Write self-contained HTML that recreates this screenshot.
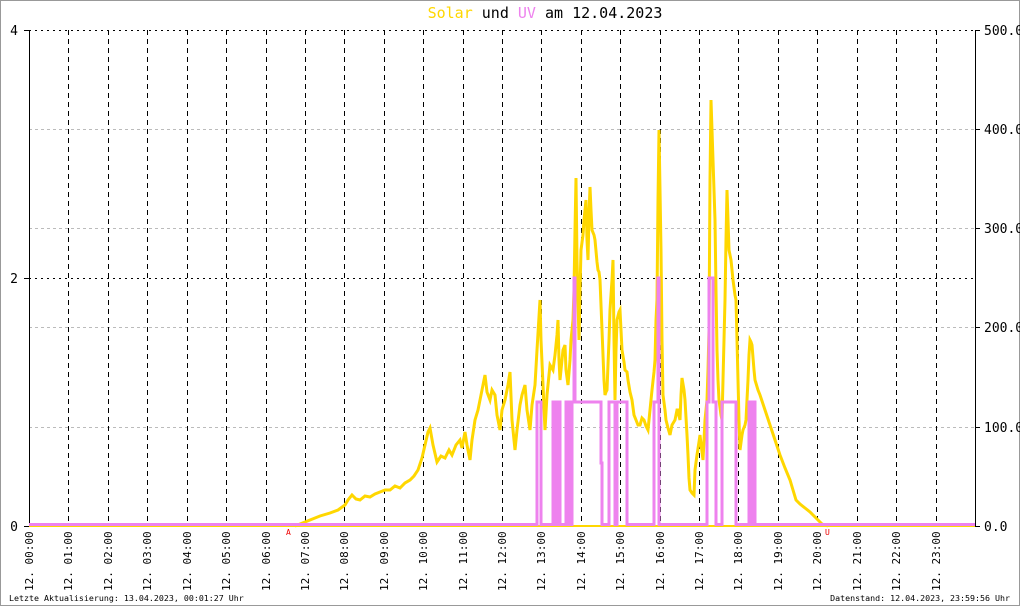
<!DOCTYPE html>
<html><head><meta charset="utf-8"><style>
html,body{margin:0;padding:0;background:#fff}
svg{display:block}
text{font-family:"DejaVu Sans Mono","Liberation Mono",monospace}
</style></head><body>
<svg width="1020" height="606" viewBox="0 0 1020 606" xmlns="http://www.w3.org/2000/svg">
<rect x="0.5" y="0.5" width="1019" height="605" fill="#fff" stroke="#999"/>
<text x="545" y="18" font-size="15" text-anchor="middle"><tspan fill="#FFD700">Solar</tspan> und <tspan fill="#EE82EE">UV</tspan> am 12.04.2023</text>
<g stroke="#bbb" stroke-dasharray="3,3" stroke-width="1">
<line x1="29" y1="129.5" x2="975" y2="129.5"/><line x1="29" y1="228.5" x2="975" y2="228.5"/>
<line x1="29" y1="327.5" x2="975" y2="327.5"/><line x1="29" y1="427.5" x2="975" y2="427.5"/>
</g>
<g stroke="#000" stroke-dasharray="2,4" stroke-width="1">
<line x1="29" y1="30.5" x2="975" y2="30.5"/><line x1="29" y1="278.5" x2="975" y2="278.5"/>
</g>
<g stroke="#000" stroke-dasharray="5,4" stroke-width="1">
<line x1="68.5" y1="30" x2="68.5" y2="526"/><line x1="108.5" y1="30" x2="108.5" y2="526"/><line x1="147.5" y1="30" x2="147.5" y2="526"/><line x1="187.5" y1="30" x2="187.5" y2="526"/><line x1="226.5" y1="30" x2="226.5" y2="526"/><line x1="266.5" y1="30" x2="266.5" y2="526"/><line x1="305.5" y1="30" x2="305.5" y2="526"/><line x1="344.5" y1="30" x2="344.5" y2="526"/><line x1="384.5" y1="30" x2="384.5" y2="526"/><line x1="423.5" y1="30" x2="423.5" y2="526"/><line x1="463.5" y1="30" x2="463.5" y2="526"/><line x1="502.5" y1="30" x2="502.5" y2="526"/><line x1="541.5" y1="30" x2="541.5" y2="526"/><line x1="581.5" y1="30" x2="581.5" y2="526"/><line x1="620.5" y1="30" x2="620.5" y2="526"/><line x1="660.5" y1="30" x2="660.5" y2="526"/><line x1="699.5" y1="30" x2="699.5" y2="526"/><line x1="738.5" y1="30" x2="738.5" y2="526"/><line x1="778.5" y1="30" x2="778.5" y2="526"/><line x1="817.5" y1="30" x2="817.5" y2="526"/><line x1="857.5" y1="30" x2="857.5" y2="526"/><line x1="896.5" y1="30" x2="896.5" y2="526"/><line x1="936.5" y1="30" x2="936.5" y2="526"/>
</g>
<line x1="29.5" y1="30" x2="29.5" y2="526" stroke="#000"/>
<line x1="975.5" y1="30" x2="975.5" y2="526" stroke="#000"/>
<line x1="29" y1="526.5" x2="975" y2="526.5" stroke="#000"/>
<g stroke="#000"><line x1="24" y1="30.5" x2="29" y2="30.5"/><line x1="24" y1="278.5" x2="29" y2="278.5"/><line x1="24" y1="526.5" x2="29" y2="526.5"/>
<line x1="975" y1="30.5" x2="980" y2="30.5"/><line x1="975" y1="129.5" x2="980" y2="129.5"/><line x1="975" y1="228.5" x2="980" y2="228.5"/><line x1="975" y1="327.5" x2="980" y2="327.5"/><line x1="975" y1="427.5" x2="980" y2="427.5"/><line x1="975" y1="526.5" x2="980" y2="526.5"/></g>
<g font-size="13" fill="#000">
<text x="18" y="35" text-anchor="end">4</text><text x="18" y="283" text-anchor="end">2</text><text x="18" y="531" text-anchor="end">0</text>
<text x="984" y="35">500.0</text><text x="984" y="134">400.0</text><text x="984" y="233">300.0</text><text x="984" y="332">200.0</text><text x="984" y="432">100.0</text><text x="984" y="531">0.0</text>
</g>
<line x1="29" y1="526" x2="975" y2="526" stroke="#FFD700" stroke-width="2"/>
<polyline fill="none" stroke="#FFD700" stroke-width="3" points="295,526 305,522 310,520 320,516 330,513 338,510 345,505 348,500 352,495 356,499 360,500 365,496 370,497 375,494 380,492 385,490 390,490 395,486 400,488 405,483 410,480 414,476 418,470 422,458 425,445 428,432 430,428 433,445 437,462 441,456 445,458 449,450 452,455 456,445 460,440 462,448 465,432 467,445 470,460 472,440 475,420 478,410 480,400 482,390 485,375 487,392 490,400 492,390 495,395 497,415 500,430 502,410 505,400 508,385 510,372 512,420 515,450 517,430 520,405 522,395 525,385 527,410 530,430 532,405 535,385 537,350 540,300 541,340 543,385 545,430 547,395 550,365 553,370 555,355 557,335 558,320 559,360 560,380 562,360 563,350 565,345 566,370 568,385 570,360 571,340 573,320 574,290 575,230 576,178 577,260 579,340 580,290 581,250 583,235 584,220 585,210 586,200 587,240 588,260 589,215 590,187 591,210 592,230 594,235 595,240 597,262 598,270 599,272 600,280 601,305 602,330 604,380 605,395 606,392 607,390 609,340 610,310 612,280 613,260 614,340 615,400 616,350 617,320 619,312 620,310 621,330 622,350 624,362 625,370 627,372 628,380 630,392 632,400 634,415 636,420 638,425 640,425 642,418 644,420 646,426 648,430 650,410 652,390 654,372 655,360 656,320 657,300 658,200 659,130 660,190 661,250 662,340 663,395 665,410 666,420 668,428 670,435 672,425 675,420 677,410 678,410 679,416 680,420 681,395 682,378 684,390 685,400 687,435 688,455 689,478 690,490 692,493 694,495 695,470 697,455 699,442 700,435 702,452 703,460 704,440 705,420 706,410 707,400 708,370 709,330 710,180 711,100 712,130 713,160 714,190 715,220 716,290 717,350 718,380 719,400 721,415 722,420 724,340 725,300 726,240 727,190 728,220 729,250 730,255 731,260 732,270 733,280 735,295 736,300 737,340 738,380 739,420 740,450 742,435 743,430 745,425 746,420 747,400 748,380 749,355 750,340 751,342 752,345 754,370 755,380 758,390 760,395 765,410 770,425 775,440 780,455 785,468 790,480 793,490 796,500 800,504 805,508 810,512 815,517 818,520 822,524 828,526"/>
<polyline fill="none" stroke="#EE82EE" stroke-width="3" points="29,524.5 537,524.5 537,402 541,402 541,524.5 553,524.5 553,402 554,402 554,524.5 555,524.5 555,402 557,402 557,524.5 558,524.5 558,402 560,402 560,524.5 566,524.5 566,402 568,402 568,524.5 569,524.5 569,402 571,402 571,524.5 572,524.5 572,402 574,402 574,278 575,278 575,402 601,402 601,463 602,463 602,524.5 609,524.5 609,402 615,402 615,524.5 617,524.5 617,402 627,402 627,524.5 654,524.5 654,402 658,402 658,278 659,278 659,524.5 707,524.5 707,402 709,402 709,278 713,278 713,402 716,402 716,524.5 722,524.5 722,402 736,402 736,524.5 749,524.5 749,402 751,402 751,524.5 753,524.5 753,402 755,402 755,524.5 975,524.5"/>
<text x="286" y="535" font-size="8" fill="#e00">A</text>
<text x="825" y="535" font-size="8" fill="#e00">U</text>
<g font-size="11" fill="#000">
<text transform="translate(33,591) rotate(-90)">12. 00:00</text>
<text transform="translate(72,591) rotate(-90)">12. 01:00</text>
<text transform="translate(112,591) rotate(-90)">12. 02:00</text>
<text transform="translate(151,591) rotate(-90)">12. 03:00</text>
<text transform="translate(191,591) rotate(-90)">12. 04:00</text>
<text transform="translate(230,591) rotate(-90)">12. 05:00</text>
<text transform="translate(270,591) rotate(-90)">12. 06:00</text>
<text transform="translate(309,591) rotate(-90)">12. 07:00</text>
<text transform="translate(348,591) rotate(-90)">12. 08:00</text>
<text transform="translate(388,591) rotate(-90)">12. 09:00</text>
<text transform="translate(427,591) rotate(-90)">12. 10:00</text>
<text transform="translate(467,591) rotate(-90)">12. 11:00</text>
<text transform="translate(506,591) rotate(-90)">12. 12:00</text>
<text transform="translate(545,591) rotate(-90)">12. 13:00</text>
<text transform="translate(585,591) rotate(-90)">12. 14:00</text>
<text transform="translate(624,591) rotate(-90)">12. 15:00</text>
<text transform="translate(664,591) rotate(-90)">12. 16:00</text>
<text transform="translate(703,591) rotate(-90)">12. 17:00</text>
<text transform="translate(742,591) rotate(-90)">12. 18:00</text>
<text transform="translate(782,591) rotate(-90)">12. 19:00</text>
<text transform="translate(821,591) rotate(-90)">12. 20:00</text>
<text transform="translate(861,591) rotate(-90)">12. 21:00</text>
<text transform="translate(900,591) rotate(-90)">12. 22:00</text>
<text transform="translate(940,591) rotate(-90)">12. 23:00</text>
</g>
<text x="9" y="601" font-size="8.3" fill="#000">Letzte Aktualisierung: 13.04.2023, 00:01:27 Uhr</text>
<text x="1010" y="601" font-size="8.3" fill="#000" text-anchor="end">Datenstand: 12.04.2023, 23:59:56 Uhr</text>
</svg>
</body></html>
